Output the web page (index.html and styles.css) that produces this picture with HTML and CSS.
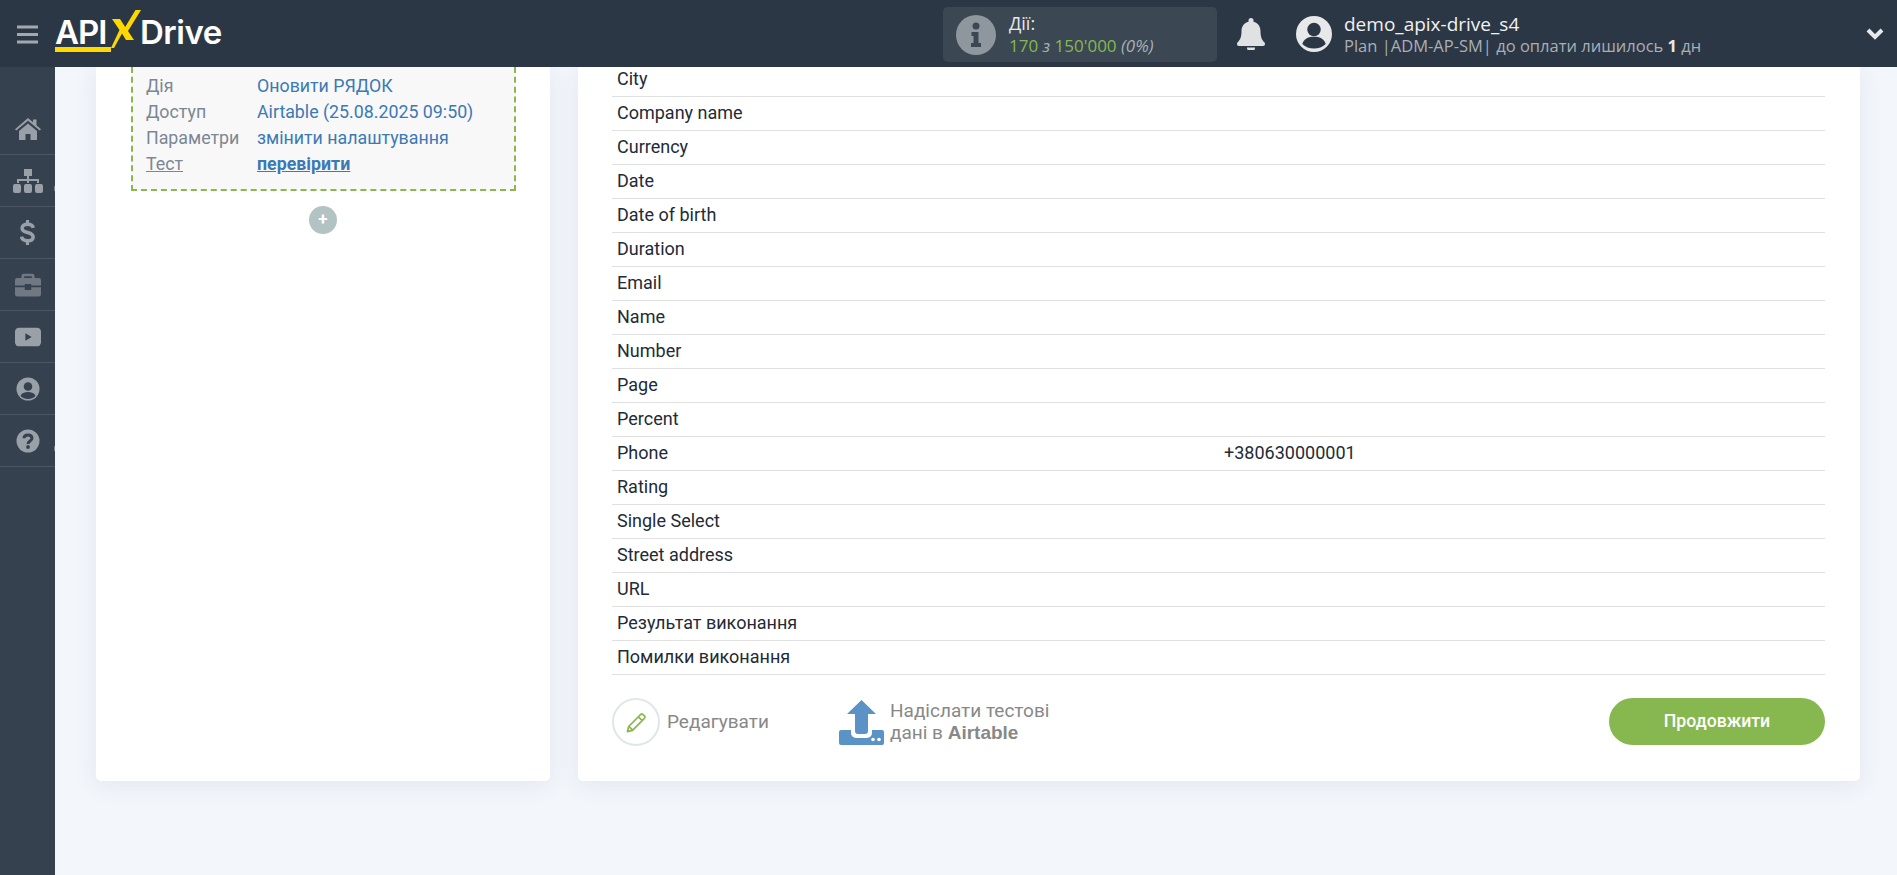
FILE: index.html
```html
<!DOCTYPE html>
<html lang="uk">
<head>
<meta charset="utf-8">
<title>ApiX-Drive</title>
<link rel="stylesheet" href="styles.css">
</head>
<body>
<header class="topbar">
  <div class="brand">
    <svg class="burger" viewBox="0 0 21 20"><path d="M0 1.5h21v3H0zM0 9h21v3H0zM0 16.500h21v3H0z"/></svg>
    <div class="logo">
      <span class="logo-api">API</span>
      <svg class="logo-x" viewBox="0 0 30 38"><path fill="#ffd800" d="M1 9h8l5.200 8L24.500 0H30L17 21l6 9h-8l-4-6.500L3 38H0l8.500-18z"/></svg>
      <span class="logo-drive">Drive</span>
    </div>
  </div>
  <div class="actions-box">
    <svg class="info-icon" viewBox="0 0 40 40"><circle cx="20" cy="20" r="20" fill="#8f979e"/><circle cx="20" cy="11" r="3.500" fill="#3b4853"/><path fill="#3b4853" d="M15.500 17h7v11h2.500v4H15v-4h2.500v-7h-2z"/></svg>
    <div class="actions-text">
      <div class="actions-title">Дії:</div>
      <div class="actions-count"><span class="count-green">170</span> <i>з</i> <span class="count-green">150'000</span> <i>(0%)</i></div>
    </div>
  </div>
  <svg class="bell" viewBox="0 0 28 32"><path fill="#dfe1e3" d="M14 0a2.500 2.500 0 0 1 2.500 2.500v1.200C21 4.700 23.500 8.500 23.500 13c0 7 2 9.500 4 11.500.5.500.5 1.100.5 1.500 0 1-.8 2-2 2H2c-1.200 0-2-1-2-2 0-.4 0-1 .5-1.500 2-2 4-4.500 4-11.500 0-4.500 2.500-8.300 7-9.300V2.500A2.500 2.500 0 0 1 14 0zM10 29.500h8a4 4 0 0 1-8 0z"/></svg>
  <div class="user">
    <svg class="avatar" viewBox="0 0 40 40"><circle cx="20" cy="20" r="20" fill="#e6e8ea"/><circle cx="20" cy="15" r="7.500" fill="#2c3745"/><path fill="#2c3745" d="M7 31c2-6 7-8 13-8s11 2 13 8c-3.500 3.500-8 5-13 5s-9.500-1.500-13-5z"/></svg>
    <div class="user-text">
      <div class="user-name">demo_apix-drive_s4</div>
      <div class="user-plan">Plan |ADM-AP-SM| до оплати лишилось <b>1</b> дн</div>
    </div>
  </div>
  <svg class="chevron" viewBox="0 0 18 12"><path fill="none" stroke="#e6e8ea" stroke-width="4" d="M2 2l7 7 7-7"/></svg>
</header>

<div class="layout">
  <nav class="sidebar">
    <a class="nav-item"><svg class="nav-icon" viewBox="0 0 26 22"><path fill="#9aa0a8" d="M13 0l5 4.300V1.500h3.500v5.800L26 11.200l-1.300 1.400L13 2.800 1.300 12.600 0 11.200zM4 13l9-7.500L22 13v9h-6.500v-6h-5v6H4z"/></svg></a>
    <a class="nav-item nav-speck"><svg class="nav-icon nav-tree" viewBox="0 0 30 24"><path fill="#9aa0a8" d="M11 0h8v7h-3v3h10v4h-2v-2h-8v2h-2v-2H6v2H4v-4h10V7h-3zM0 17a2 2 0 0 1 2-2h4a2 2 0 0 1 2 2v5a2 2 0 0 1-2 2H2a2 2 0 0 1-2-2zM11 17a2 2 0 0 1 2-2h4a2 2 0 0 1 2 2v5a2 2 0 0 1-2 2h-4a2 2 0 0 1-2-2zM22 17a2 2 0 0 1 2-2h4a2 2 0 0 1 2 2v5a2 2 0 0 1-2 2h-4a2 2 0 0 1-2-2z"/></svg></a>
    <a class="nav-item"><svg class="nav-icon nav-dollar" viewBox="0 0 14 24"><path fill="none" stroke="#9aa0a8" stroke-width="3.400" d="M12.500 7.500C12 5 10 4 7 4 4 4 1.800 5.300 1.800 7.800c0 5.500 10.600 3 10.600 8.500C12.400 19 10 20 7 20c-3 0-5.300-1.300-5.800-4"/><path fill="#9aa0a8" d="M5.500 0h3v4h-3zM5.500 20h3v4h-3z"/></svg></a>
    <a class="nav-item"><svg class="nav-icon" viewBox="0 0 24 21"><path fill="#6f7883" d="M8 0h8a2 2 0 0 1 2 2v2h4a2 2 0 0 1 2 2v5h-9v-1.500h-6V11H0V6a2 2 0 0 1 2-2h4V2a2 2 0 0 1 2-2zm.5 2.500V4h7V2.500zM0 12.500h9V15h6v-2.500h9V19a2 2 0 0 1-2 2H2a2 2 0 0 1-2-2z"/></svg></a>
    <a class="nav-item"><svg class="nav-icon" viewBox="0 0 25 18"><rect width="25" height="18" rx="4" fill="#9aa0a8"/><path fill="#364150" d="M10 5.500l6 3.500-6 3.500z"/></svg></a>
    <a class="nav-item"><svg class="nav-icon" viewBox="0 0 24 24"><circle cx="12" cy="12" r="11.500" fill="#9aa0a8"/><circle cx="12" cy="9.500" r="4.300" fill="#364150"/><path fill="#364150" d="M4.500 19c1-3 4-4 7.500-4s6.500 1 7.500 4c-2 2-4.500 3-7.500 3s-5.500-1-7.500-3z"/></svg></a>
    <a class="nav-item nav-speck"><svg class="nav-icon" viewBox="0 0 24 24"><circle cx="12" cy="12" r="11.500" fill="#9aa0a8"/><path fill="none" stroke="#364150" stroke-width="3" d="M8 9.300C8 7 9.700 6 12 6s4 1.200 4 3.200c0 3-4 2.800-4 5.800"/><circle cx="12" cy="18" r="1.900" fill="#364150"/></svg></a>
  </nav>

  <main class="content">
    <section class="card card-left">
      <div class="step-box">
        <div class="step-row"><span class="step-label">Дія</span><a class="step-value">Оновити РЯДОК</a></div>
        <div class="step-row"><span class="step-label">Доступ</span><a class="step-value">Airtable (25.08.2025 09:50)</a></div>
        <div class="step-row"><span class="step-label">Параметри</span><a class="step-value">змінити налаштування</a></div>
        <div class="step-row"><span class="step-label step-test">Тест</span><a class="step-value step-check">перевірити</a></div>
      </div>
      <div class="add-step">+</div>
    </section>

    <section class="card card-right">
      <div class="fields">
        <div class="field field-first"><span class="field-name">City</span></div>
        <div class="field"><span class="field-name">Company name</span></div>
        <div class="field"><span class="field-name">Currency</span></div>
        <div class="field"><span class="field-name">Date</span></div>
        <div class="field"><span class="field-name">Date of birth</span></div>
        <div class="field"><span class="field-name">Duration</span></div>
        <div class="field"><span class="field-name">Email</span></div>
        <div class="field"><span class="field-name">Name</span></div>
        <div class="field"><span class="field-name">Number</span></div>
        <div class="field"><span class="field-name">Page</span></div>
        <div class="field"><span class="field-name">Percent</span></div>
        <div class="field"><span class="field-name">Phone</span><span>+380630000001</span></div>
        <div class="field"><span class="field-name">Rating</span></div>
        <div class="field"><span class="field-name">Single Select</span></div>
        <div class="field"><span class="field-name">Street address</span></div>
        <div class="field"><span class="field-name">URL</span></div>
        <div class="field"><span class="field-name">Результат виконання</span></div>
        <div class="field"><span class="field-name">Помилки виконання</span></div>
      </div>
      <div class="card-actions">
        <a class="edit-action">
          <span class="edit-circle"><svg class="edit-icon" viewBox="0 0 22 22"><path fill="none" stroke="#8ab84f" stroke-width="1.800" stroke-linejoin="round" d="M1.500 20.500l1.300-5.300L15.500 2.500a1.500 1.500 0 0 1 2.100 0l1.900 1.900a1.500 1.500 0 0 1 0 2.100L6.800 19.200zM13 5l4 4M3 15l4 4"/></svg></span>
          <span class="edit-label">Редагувати</span>
        </a>
        <a class="send-action">
          <svg class="send-icon" viewBox="0 0 45 45"><path fill="#5b93c7" d="M22.500 0L37 14H29v17a3 3 0 0 1-3 3h-7a3 3 0 0 1-3-3V14H8z"/><path fill="#5b93c7" d="M2 30h10v3a5 5 0 0 0 5 5h11a5 5 0 0 0 5-5v-3h10a2 2 0 0 1 2 2v11a2 2 0 0 1-2 2H2a2 2 0 0 1-2-2V32a2 2 0 0 1 2-2z"/><circle cx="34" cy="39.500" r="1.800" fill="#fff"/><circle cx="40" cy="39.500" r="1.800" fill="#fff"/></svg>
          <span class="send-text">Надіслати тестові<br>дані в <b>Airtable</b></span>
        </a>
        <a class="continue-btn">Продовжити</a>
      </div>
    </section>
  </main>
</div>
</body>
</html>
```
FILE: styles.css
```css
* { box-sizing: border-box; }
html, body { margin: 0; height: 875px; overflow: hidden; }
body { background: #f3f6fb; font-family: Roboto, "Liberation Sans", sans-serif; font-size: 18px; color: #222b36; }

.topbar { height: 67px; background: #2c3745; display: flex; align-items: center; position: relative; }
.brand { display: flex; align-items: center; width: 943px; padding-left: 17px; }
.burger { width: 21px; height: 20px; fill: #a3a8ae; flex: none; }
.logo { display: flex; align-items: flex-start; margin-left: 17px; height: 40px; margin-top: -1px; color: #fff; font-family: Inter, "Open Sans", sans-serif; font-weight: 600; font-size: 33px; line-height: 38px; }
.logo-api { width: 56px; height: 39px; border-bottom: 5px solid #ffd800; letter-spacing: -1px; }
.logo-x { width: 30px; height: 38px; margin-top: -3px; flex: none; }
.logo-drive { letter-spacing: -0.5px; margin-left: -1px; }

.actions-box { width: 274px; height: 55px; margin-top: 2px; background: #3b4853; border-radius: 5px; display: flex; align-items: center; padding-left: 13px; font-family: "Open Sans", sans-serif; }
.info-icon { width: 40px; height: 40px; flex: none; }
.actions-text { margin-left: 13px; }
.actions-title { font-size: 18px; line-height: 22px; color: #e6e8ea; }
.actions-count { font-size: 17px; line-height: 24px; color: #a9afb5; }
.count-green { color: #86b84f; }

.bell { width: 28px; height: 32px; margin-left: 20px; flex: none; }
.user { display: flex; align-items: center; margin-left: 31px; font-family: "Open Sans", sans-serif; }
.avatar { width: 36px; height: 36px; flex: none; }
.user-text { margin-left: 12px; }
.user-name { font-size: 19px; line-height: 24px; color: #f0f1f2; }
.user-plan { font-size: 16.5px; line-height: 20px; color: #a9afb5; }
.user-plan b { color: #e6e8ea; }
.chevron { width: 18px; height: 12px; margin-left: auto; margin-right: 13px; flex: none; }

.layout { display: flex; height: 808px; }
.sidebar { width: 55px; flex: none; background: #364150; padding-top: 36px; }
.nav-item { display: flex; align-items: center; justify-content: center; height: 52px; border-bottom: 1px solid #4a5462; position: relative; }
.nav-speck::after { content: ""; position: absolute; right: 0; top: 31px; width: 1px; height: 5px; background: #7b838d; }
.nav-icon { width: 26px; height: 24px; }
.nav-tree { width: 30px; }
.nav-dollar { width: 15px; height: 25px; }

.content { flex: 1; display: flex; align-items: flex-start; gap: 28px; padding-left: 41px; }
.card { background: #fff; height: 714px; border-radius: 0 0 5px 5px; box-shadow: 0 4px 24px rgba(60, 80, 120, 0.09); }
.card-left { width: 454px; padding: 0 34px 0 35px; display: flex; flex-direction: column; }
.card-right { width: 1282px; padding: 0 35px 0 34px; }

.step-box { height: 124px; padding: 6px 16px 0 13px; background: #f8f8f8; border: 2px dashed #8ab84f; border-top: none; font-size: 17.8px; }
.step-row { display: flex; height: 26px; line-height: 26px; }
.step-label { width: 111px; color: #7b8794; flex: none; }
.step-test { text-decoration: underline; }
.step-value { color: #3c79b5; white-space: nowrap; }
.step-check { font-weight: 700; text-decoration: underline; }
.add-step { align-self: center; width: 28px; height: 28px; margin-top: 15px; margin-right: 1px; border-radius: 50%; background: #b3c3c3; color: #fff; font-weight: 700; font-size: 17px; line-height: 27px; text-align: center; }

.field { display: flex; height: 34px; align-items: center; padding: 0 0 2px 5px; border-bottom: 1px solid #e0e0e0; color: #222b36; }
.field-first { height: 30px; align-items: flex-end; padding-bottom: 7px; }
.field-name { width: 607px; flex: none; }

.card-actions { display: flex; align-items: flex-start; padding-top: 23px; color: #888; }
.edit-action { display: flex; align-items: center; gap: 7px; width: 227px; font-size: 19px; height: 48px; }
.edit-label { padding-bottom: 2px; }
.edit-circle { width: 48px; height: 48px; border: 2px solid #dfe8e6; border-radius: 50%; display: flex; align-items: center; justify-content: center; flex: none; }
.edit-icon { width: 21px; height: 21px; }
.send-action { display: flex; align-items: center; gap: 6px; height: 48px; }
.send-icon { width: 45px; height: 45px; flex: none; }
.send-text { font-size: 19px; line-height: 22px; }
.send-text b { font-family: "Liberation Sans", sans-serif; }
.continue-btn { margin-left: auto; width: 216px; height: 47px; border-radius: 24px; background: #86b84f; color: #fff; font-size: 17.7px; font-weight: 500; line-height: 47px; text-align: center; }
```
